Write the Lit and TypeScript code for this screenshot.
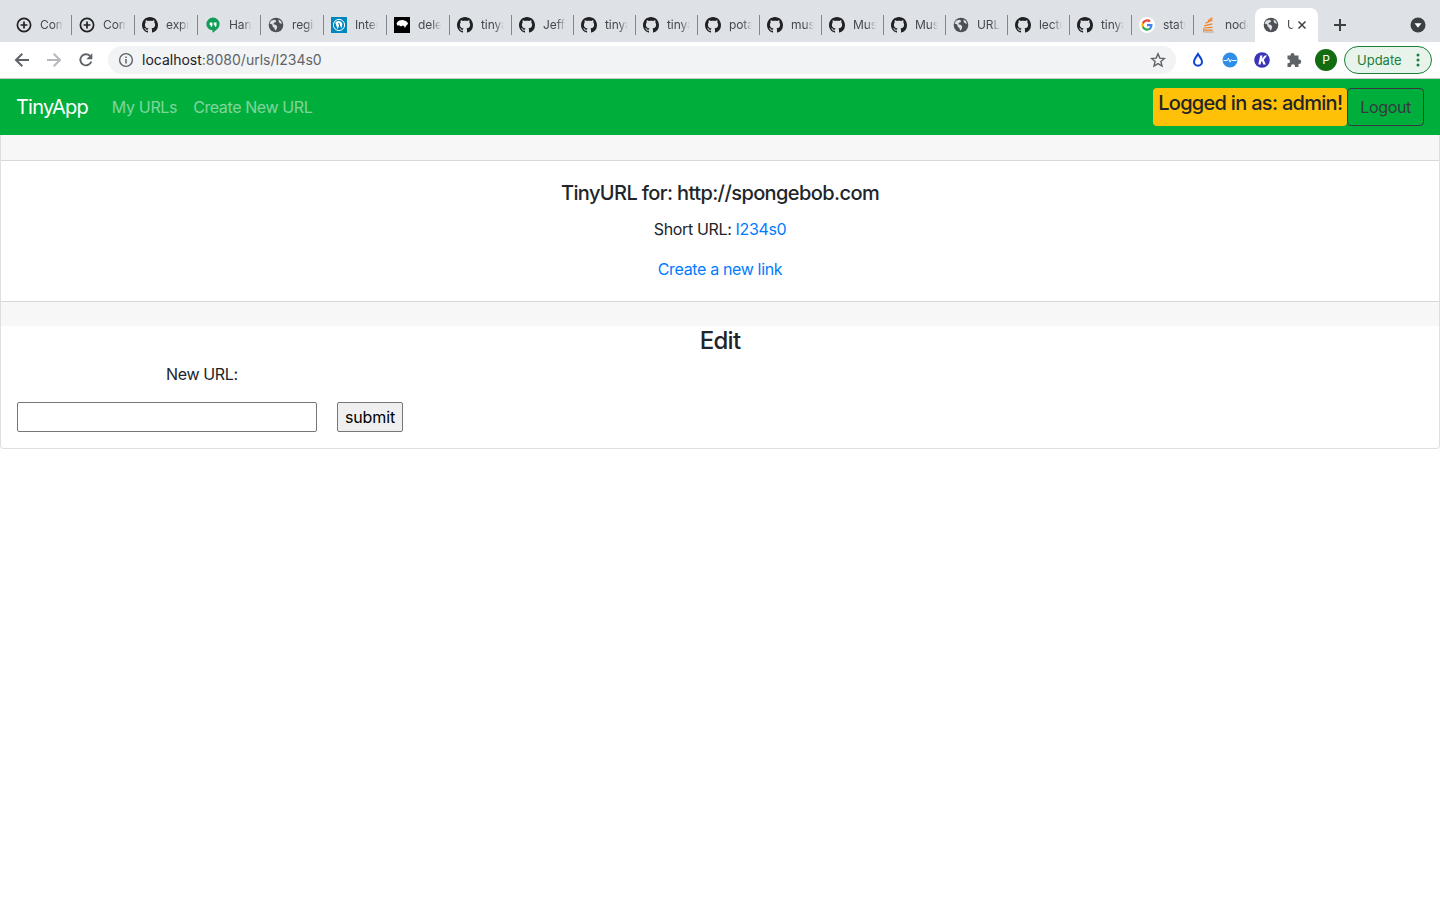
import { LitElement, html, css, svg } from "lit"
import { customElement } from "lit/decorators.js"

const GITHUB = "M8 0C3.58 0 0 3.58 0 8c0 3.54 2.29 6.53 5.47 7.59.4.07.55-.17.55-.41 0-.19-.01-.82-.01-1.49-2.01.37-2.53-.49-2.69-.94-.09-.23-.48-.94-.82-1.13-.28-.15-.68-.52-.01-.53.63-.01 1.08.58 1.23.82.72 1.21 1.87.87 2.33.66.07-.52.28-.87.51-1.07-1.78-.2-3.64-.89-3.64-3.95 0-.87.31-1.59.82-2.15-.08-.2-.36-1.02.08-2.12 0 0 .67-.21 2.2.82.64-.18 1.32-.27 2-.27.68 0 1.36.09 2 .27 1.53-1.04 2.2-.82 2.2-.82.44 1.1.16 1.92.08 2.12.51.56.82 1.27.82 2.15 0 3.07-1.87 3.75-3.65 3.95.29.25.54.73.54 1.48 0 1.07-.01 1.93-.01 2.2 0 .21.15.46.55.38A8.013 8.013 0 0016 8c0-4.42-3.58-8-8-8z"

const icons: Record<string, unknown> = {
  github: svg`<path fill="#202124" d=${GITHUB}/>`,
  plus: svg`<circle cx="8" cy="8" r="6.6" fill="none" stroke="#202124" stroke-width="1.7"/><path d="M8 4.600v6.800M4.600 8h6.800" stroke="#202124" stroke-width="1.700"/>`,
  hangouts: svg`<path fill="#0f9d58" d="M8 0.5a6.6 6.6 0 0 0-6.6 6.6c0 3.6 3.1 6.2 6.1 6.2v2.4c3.4-1.7 7.1-4.9 7.1-8.6A6.6 6.6 0 0 0 8 .5z"/><path fill="#fff" d="M4.700 5.400h2.700v2.800c0 1-.7 1.700-1.600 1.800v-1.700H4.700zM8.800 5.400h2.700v2.800c0 1-.7 1.700-1.600 1.800v-1.700H8.800z"/>`,
  globe: svg`<circle cx="8" cy="8" r="7.300" fill="#4d5156"/><path fill="#dee1e6" d="M3 3.700l3.200-.9 2 .9-.6 1.600-1.700.4-.5 1.600 2.200.5 1.600 1.500-.4 2.400-1.500 2-1-2.600-1.600-1.400-.5-2.100L1.600 6.400zM10.500 2.600l2.300 1.400 1.300 2.600-1.700-.2-1.500-1.200z"/>`,
  wordpress: svg`<rect width="16" height="16" fill="#0087be"/><circle cx="8" cy="8" r="5.600" fill="none" stroke="#fff" stroke-width="1"/><path fill="#fff" d="M4.300 5.700l2.400 6.700 1.300-3.900-.9-2.600h1.900l-.7 0 1.900 5.700 1.100-3.600c.3-1.100-.3-2.400-1.300-3.200-2-1.400-4.400-.8-5.700.9z"/>`,
  dele: svg`<rect width="16" height="16" fill="#000"/><path fill="#fff" d="M2.500 6.500C3.500 4 6.500 2.800 9.500 3.200c2.500.3 4.200 1.700 4.500 3.500-.7 1-1.500 1.300-2 2.500l-1.200 1.800-.5-1.700-1.500-.8-1.700 1-2.300-1.200-1.200.5z"/>`,
  google: svg`<circle cx="8" cy="8" r="8" fill="#fff"/><path fill="#4285f4" d="M13.500 8.100c0-.4 0-.8-.1-1.100H8v2.200h3.100c-.1.700-.5 1.300-1.100 1.700v1.400h1.800c1.100-1 1.700-2.500 1.700-4.200z"/><path fill="#34a853" d="M8 13.700c1.500 0 2.800-.5 3.800-1.400L10 10.900c-.5.300-1.200.6-2 .6-1.500 0-2.700-1-3.200-2.400H3v1.400c.9 1.900 2.800 3.200 5 3.200z"/><path fill="#fbbc05" d="M4.800 9.100c-.2-.7-.2-1.500 0-2.200V5.500H3a5.700 5.700 0 0 0 0 5z"/><path fill="#ea4335" d="M8 4.500c.8 0 1.600.3 2.200.8l1.600-1.600A5.600 5.600 0 0 0 3 5.500l1.800 1.400C5.300 5.500 6.500 4.500 8 4.500z"/>`,
  stack: svg`<path fill="none" stroke="#b9a48f" stroke-width="1" d="M2.500 11v4h10.500"/><path stroke="#f48024" stroke-width="1.200" fill="none" d="M2.800 13.200h8.700M3 11l8.500-.6M3.300 8.800l8-2M4.500 6.300l7-3.400M7 3.800L11.500.8"/>`,
}

interface Tab {
  icon: string
  title: string
  wide?: boolean
}

const tabs: Tab[] = [
  { icon: "plus", title: "Compare", wide: true },
  { icon: "plus", title: "Compare", wide: true },
  { icon: "github", title: "express", wide: true },
  { icon: "hangouts", title: "Hangouts", wide: true },
  { icon: "globe", title: "register", wide: true },
  { icon: "wordpress", title: "Internet", wide: true },
  { icon: "dele", title: "delete", wide: true },
  { icon: "github", title: "tinyapp" },
  { icon: "github", title: "Jeff" },
  { icon: "github", title: "tinyapp" },
  { icon: "github", title: "tinyapp" },
  { icon: "github", title: "potato" },
  { icon: "github", title: "music" },
  { icon: "github", title: "Music" },
  { icon: "github", title: "Music" },
  { icon: "globe", title: "URL" },
  { icon: "github", title: "lecture" },
  { icon: "github", title: "tinyapp" },
  { icon: "google", title: "status" },
  { icon: "stack", title: "node" },
]

@customElement("browser-chrome")
class BrowserChrome extends LitElement {
  static styles = css`
    :host {
      display: block;
      font-family: Inter, "Liberation Sans", sans-serif;
      letter-spacing: normal;
    }

    .strip {
      height: 42px;
      background: #dee1e6;
      display: flex;
      padding: 8px 0 0 8px;
      box-sizing: border-box;
    }

    .tab {
      width: 62px;
      height: 34px;
      box-sizing: border-box;
      display: flex;
      align-items: center;
      padding: 0 8px;
      gap: 8px;
      position: relative;
      flex: none;
    }

    .tab.wide {
      width: 63px;
    }

    .tab::after {
      content: "";
      position: absolute;
      right: -1px;
      top: 7px;
      height: 20px;
      width: 1px;
      background: #80868b;
    }

    .tab svg {
      width: 16px;
      height: 16px;
      flex: none;
    }

    .title {
      font-size: 12px;
      letter-spacing: -0.1px;
      color: #45494e;
      width: 23px;
      flex: none;
      overflow: hidden;
      white-space: nowrap;
      -webkit-mask-image: linear-gradient(to right, #000 60%, transparent);
      mask-image: linear-gradient(to right, #000 60%, transparent);
    }

    .tab.active {
      width: 63px;
      background: #fff;
      border-radius: 8px 8px 0 0;
    }

    .tab.active::after {
      display: none;
    }

    .tab.active .title {
      width: 7px;
    }

    .tab.active .close {
      width: 10px;
      height: 10px;
      margin-left: -5px;
    }

    .new-tab {
      width: 16px;
      height: 34px;
      margin-left: 14px;
      display: flex;
      align-items: center;
    }

    .new-tab svg {
      width: 16px;
      height: 16px;
    }

    .tab-search {
      margin-left: auto;
      margin-right: 14px;
      height: 34px;
      display: flex;
      align-items: center;
    }

    .tab-search svg {
      width: 16px;
      height: 16px;
    }

    .toolbar {
      height: 37px;
      background: #fff;
      display: flex;
      align-items: flex-start;
      padding-top: 4px;
      box-sizing: border-box;
      border-bottom: 1px solid #c8cacd;
    }

    .nav {
      width: 32px;
      height: 28px;
      display: flex;
      align-items: center;
      justify-content: center;
      flex: none;
    }

    .nav svg {
      width: 16px;
      height: 16px;
    }

    .nav .avatar {
      width: 22px;
      height: 22px;
    }

    .nav-group {
      display: flex;
      padding-left: 6px;
      flex: none;
    }

    .omnibox {
      flex: none;
      width: 1068px;
      margin-left: 6px;
      height: 28px;
      border-radius: 14px;
      background: #f1f3f4;
      display: flex;
      align-items: center;
      padding: 0 10px;
      box-sizing: border-box;
      font-size: 14px;
    }

    .omnibox svg {
      width: 16px;
      height: 16px;
      flex: none;
    }

    .url {
      margin-left: 8px;
      color: #5f6368;
      flex: 1;
    }

    .url b {
      font-weight: 400;
      color: #202124;
    }

    .ext {
      display: flex;
      padding-left: 6px;
      flex: none;
    }

    .update {
      margin-left: 2px;
      width: 88px;
      height: 28px;
      box-sizing: border-box;
      border: 1px solid #188038;
      border-radius: 14px;
      background: #e8f3ec;
      color: #188038;
      font-size: 13px;
      display: flex;
      align-items: center;
      padding-left: 12px;
      gap: 14px;
      flex: none;
    }

    .update svg {
      width: 4px;
      height: 14px;
    }
  `

  render() {
    return html`
      <div class="strip">
        ${tabs.map(t => html`
          <div class="tab ${t.wide ? "wide" : ""}">
            <svg viewBox="0 0 16 16">${icons[t.icon]}</svg>
            <span class="title">${t.title}</span>
          </div>
        `)}
        <div class="tab active">
          <svg viewBox="0 0 16 16">${icons.globe}</svg>
          <span class="title">URL</span>
          <svg class="close" viewBox="0 0 10 10"><path d="M1.500 1.500l7 7M8.500 1.500l-7 7" stroke="#3c4043" stroke-width="1.500"/></svg>
        </div>
        <div class="new-tab">
          <svg viewBox="0 0 16 16"><path d="M8 2v12M2 8h12" stroke="#3c4043" stroke-width="2"/></svg>
        </div>
        <div class="tab-search">
          <svg viewBox="0 0 16 16"><circle cx="8" cy="8" r="7.500" fill="#3c4043"/><path d="M4.500 6.300h7L8 10.800z" fill="#fff"/></svg>
        </div>
      </div>
      <div class="toolbar">
        <div class="nav-group">
          <div class="nav"><svg viewBox="0 0 16 16"><path d="M15 8H2.500M8.300 1.800L2 8l6.300 6.200" fill="none" stroke="#5f6368" stroke-width="2"/></svg></div>
          <div class="nav"><svg viewBox="0 0 16 16"><path d="M1 8h12.500M7.700 1.800L14 8l-6.300 6.200" fill="none" stroke="#b6b8bb" stroke-width="2"/></svg></div>
          <div class="nav"><svg viewBox="0 0 16 16"><path d="M13.300 9.500A5.600 5.600 0 1 1 12 3.900" fill="none" stroke="#5f6368" stroke-width="1.900"/><path d="M14.300 1.200v6h-6z" fill="#5f6368"/></svg></div>
        </div>
        <div class="omnibox">
          <svg viewBox="0 0 16 16"><circle cx="8" cy="8" r="6.400" fill="none" stroke="#5f6368" stroke-width="1.400"/><path d="M8 7v4.500M8 4.500v1.500" stroke="#5f6368" stroke-width="1.500"/></svg>
          <span class="url"><b>localhost</b>:8080/urls/I234s0</span>
          <svg viewBox="0 0 16 16"><path d="M8 1.800l1.800 4.300 4.600.4-3.500 3 1.100 4.500-4-2.400-4 2.400 1.100-4.500-3.500-3 4.600-.4z" fill="none" stroke="#5f6368" stroke-width="1.400"/></svg>
        </div>
        <div class="ext">
          <div class="nav"><svg viewBox="0 0 16 16"><path d="M8 2c1.700 3 4 4.800 4 7.700a4 4 0 0 1-8 0C4 6.800 6.300 5 8 2z" fill="none" stroke="#0b43d6" stroke-width="2"/></svg></div>
          <div class="nav"><svg viewBox="0 0 16 16"><circle cx="8" cy="8" r="7.500" fill="#2f8fe8"/><path d="M1.500 8.500h3.800l1.100-2.300 1.700 3.900 1.300-2.400.8.800h4.300" fill="none" stroke="#fff" stroke-width="1"/></svg></div>
          <div class="nav"><svg viewBox="0 0 16 16"><circle cx="8" cy="8" r="7.800" fill="#3a35b8"/><path d="M6.200 3.500h2.300l-.7 3.300 3-3.300h2.300L9.800 7.700l2 4.800H9.300L8 9l-.8.800-.6 2.700H4.300z" fill="#fff"/></svg></div>
          <div class="nav"><svg viewBox="0 0 16 16"><path fill="#5f6368" d="M6.500 1a2 2 0 0 1 2 2v.5h4V7.500h.500a2.200 2.200 0 0 1 0 4.500h-.5v3h-3.500v-.7a2 2 0 0 0-4 0v.7H1.500v-3.700H2a2 2 0 0 0 0-4h-.5V3.500h3V3a2 2 0 0 1 2-2z"/></svg></div>
          <div class="nav"><svg class="avatar" viewBox="0 0 22 22"><circle cx="11" cy="11" r="11" fill="#146c11"/><text x="11" y="15" font-size="12" text-anchor="middle" fill="#fff" font-family="Inter, sans-serif">P</text></svg></div>
        </div>
        <div class="update">
          <span>Update</span>
          <svg viewBox="0 0 4 14"><circle cx="2" cy="2" r="1.500" fill="#188038"/><circle cx="2" cy="7" r="1.500" fill="#188038"/><circle cx="2" cy="12" r="1.500" fill="#188038"/></svg>
        </div>
      </div>
    `
  }
}

@customElement("app-root")
class AppRoot extends LitElement {
  static styles = css`
    :host {
      display: block;
      font-family: Inter, "Liberation Sans", sans-serif;
      font-size: 16px;
      line-height: 24px;
      letter-spacing: -0.35px;
      color: #212529;
      background: #fff;
      min-height: 900px;
    }

    a {
      color: #007bff;
      text-decoration: none;
    }

    .navbar {
      background: #00ae3b;
      height: 56px;
      display: flex;
      align-items: center;
      padding: 0 16px;
      box-sizing: border-box;
    }

    .brand {
      color: #fff;
      font-size: 20px;
      letter-spacing: -0.8px;
      margin-right: 16px;
    }

    .navlink {
      color: rgba(255, 255, 255, 0.5);
      padding: 0 8px;
    }

    .navlink + .navlink {
      letter-spacing: -0.4px;
    }

    .right {
      margin-left: auto;
      display: flex;
    }

    .who {
      background: #ffc107;
      border-radius: 4px;
      font-size: 20px;
      font-weight: 500;
      letter-spacing: -0.7px;
      line-height: 30px;
      height: 38px;
      box-sizing: border-box;
      padding: 0 5px;
    }

    .logout {
      height: 38px;
      box-sizing: border-box;
      border: 1px solid #343a40;
      border-radius: 4px;
      color: #343a40;
      padding: 6px 12px;
    }

    .card {
      border: 1px solid rgba(0, 0, 0, 0.125);
      border-top: none;
      border-radius: 0 0 4px 4px;
      height: 314px;
      box-sizing: border-box;
    }

    .band {
      background: #f7f7f7;
      height: 25px;
      border-bottom: 1px solid rgba(0, 0, 0, 0.125);
    }

    .band.footer {
      height: 24px;
      border-bottom: none;
      border-top: 1px solid rgba(0, 0, 0, 0.125);
    }

    .body {
      height: 140px;
      box-sizing: border-box;
      padding-top: 20px;
      text-align: center;
    }

    .body h5 {
      margin: 0 0 12px;
      font-size: 20px;
      letter-spacing: -0.6px;
      line-height: 24px;
      font-weight: 500;
    }

    .body p {
      margin: 0 0 16px;
    }

    .edit h3 {
      margin: 0;
      text-align: center;
      font-size: 24px;
      letter-spacing: -0.7px;
      line-height: 29px;
      font-weight: 500;
    }

    .edit label {
      display: block;
      margin: 7px 0 16px 165px;
    }

    .edit .row {
      display: flex;
      gap: 20px;
      padding-left: 16px;
    }

    input {
      width: 300px;
      height: 30px;
      box-sizing: border-box;
      border: 1px solid #767676;
      border-radius: 2px;
      background: #fff;
    }

    button {
      width: 66px;
      height: 30px;
      box-sizing: border-box;
      border: 1px solid #767676;
      border-radius: 2px;
      background: #efefef;
      color: #000;
      font: inherit;
      letter-spacing: -0.1px;
      padding: 0;
    }
  `

  render() {
    return html`
      <browser-chrome></browser-chrome>
      <nav class="navbar">
        <span class="brand">TinyApp</span>
        <a class="navlink" href="#">My URLs</a>
        <a class="navlink" href="#">Create New URL</a>
        <div class="right">
          <div class="who">Logged in as: admin!</div>
          <div class="logout">Logout</div>
        </div>
      </nav>
      <section class="card">
        <div class="band"></div>
        <div class="body">
          <h5>TinyURL for: http://spongebob.com</h5>
          <p>Short URL: <a href="#">I234s0</a></p>
          <a href="#">Create a new link</a>
        </div>
        <div class="band footer"></div>
        <div class="edit">
          <h3>Edit</h3>
          <label>New URL:</label>
          <div class="row">
            <input type="text" />
            <button>submit</button>
          </div>
        </div>
      </section>
    `
  }
}
